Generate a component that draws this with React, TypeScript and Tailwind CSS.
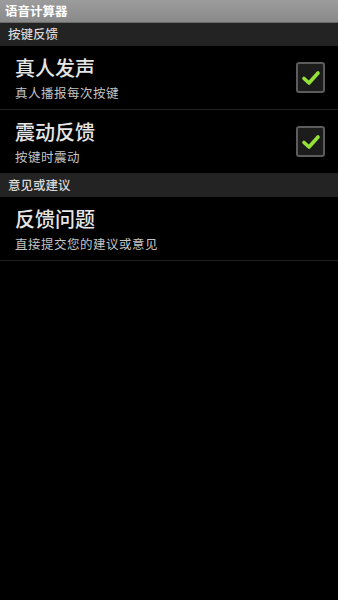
import React from "react";

const font = { fontFamily: '"Noto Sans CJK SC", "Noto Sans", sans-serif' };

function Check() {
  return (
    <div className="w-[29px] h-[31px] rounded-[3px] border-2 border-[#5c5c5c] bg-[#1c1c1c] flex items-center justify-center">
      <svg width="20" height="16" viewBox="0 0 20 16">
        <path d="M3 8.5 L8 13 L17 3" fill="none" stroke="#93e23a" strokeWidth="3.6" strokeLinecap="round" strokeLinejoin="round" />
      </svg>
    </div>
  );
}

function Header({ text }: { text: string }) {
  return (
    <div className="h-[23px] bg-[#232323] flex items-center pl-[8px] text-[12.5px] text-[#d8d8d8] font-medium leading-none">
      {text}
    </div>
  );
}

function Row({ title, sub, checked }: { title: string; sub: string; checked?: boolean }) {
  return (
    <div className="h-[64px] border-b border-[#1f1f1f] flex items-center pl-[15px] pr-[13px]">
      <div className="flex-1 flex flex-col pt-[1px]">
        <div className="text-[20px] leading-[24px] text-[#e6e6e6] font-medium">{title}</div>
        <div className="text-[12.5px] leading-[16px] mt-[5px] text-[#c4c4c4] tracking-[0.5px]">{sub}</div>
      </div>
      {checked && <Check />}
    </div>
  );
}

export default function App() {
  return (
    <div className="w-[338px] h-[600px] bg-black overflow-hidden" style={font}>
      <div className="h-[23px] bg-gradient-to-b from-[#9c9c9c] to-[#8a8a8a] border-b border-[#6a6a6a] flex items-center pl-[5px] text-[12.5px] text-white font-bold leading-none">
        语音计算器
      </div>
      <Header text="按键反馈" />
      <Row title="真人发声" sub="真人播报每次按键" checked />
      <Row title="震动反馈" sub="按键时震动" checked />
      <Header text="意见或建议" />
      <Row title="反馈问题" sub="直接提交您的建议或意见" />
    </div>
  );
}
